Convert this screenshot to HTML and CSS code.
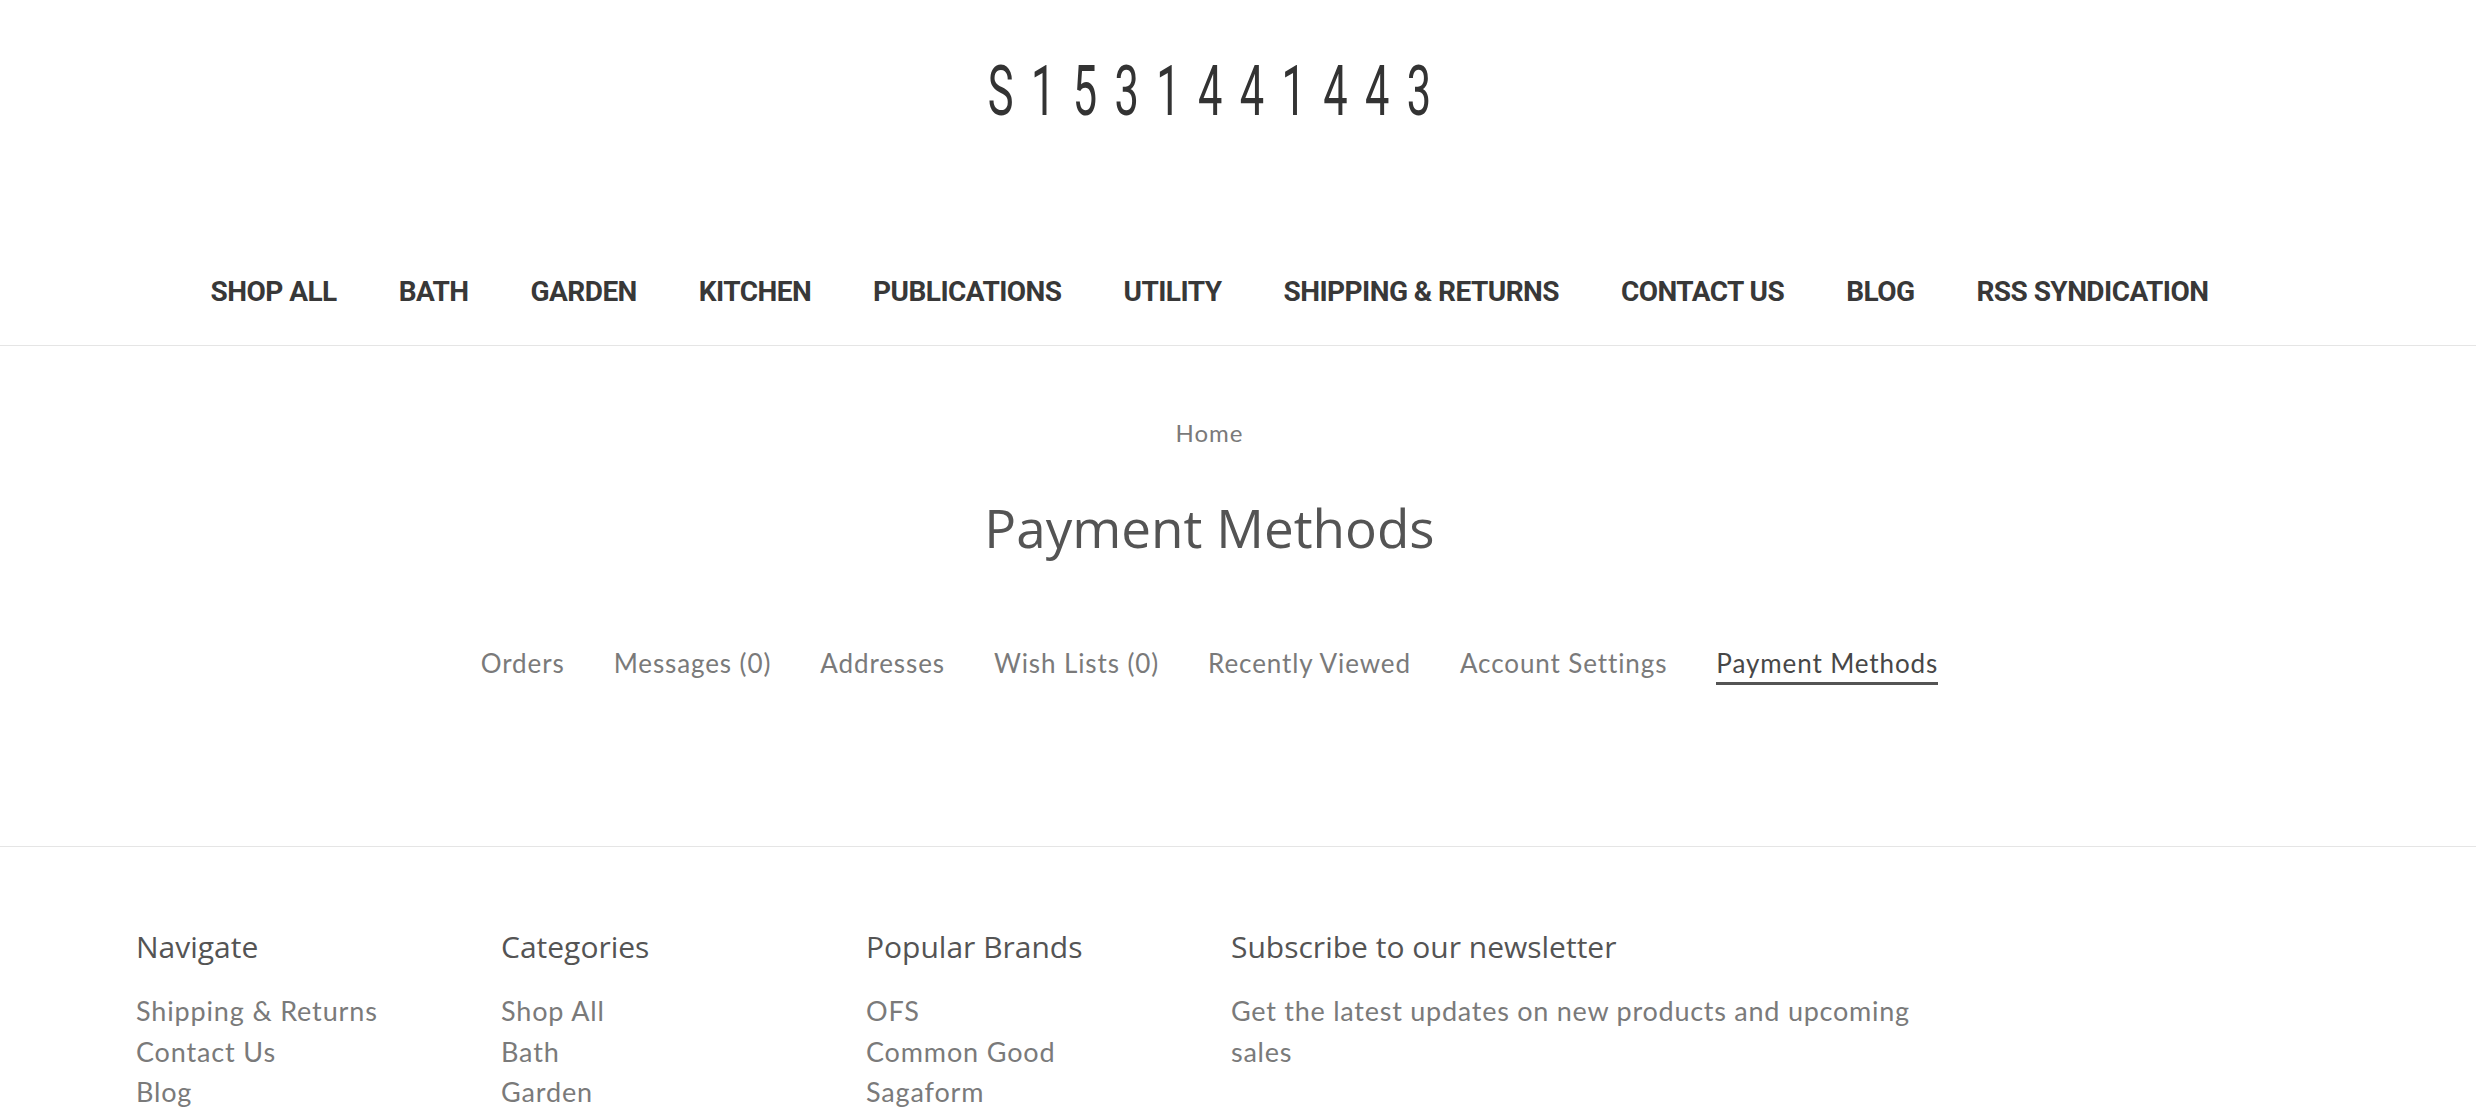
FILE: index.html
```html
<!DOCTYPE html>
<html lang="en">
<head>
<meta charset="utf-8">
<title>Payment Methods</title>
<link rel="stylesheet" href="styles.css">
</head>
<body>
<header class="header">
  <div class="logo-row">
    <a class="logo" href="#"><span class="logo-text">S1531441443</span></a>
  </div>
  <nav class="main-nav">
    <a href="#">SHOP ALL</a>
    <a href="#">BATH</a>
    <a href="#">GARDEN</a>
    <a href="#">KITCHEN</a>
    <a href="#">PUBLICATIONS</a>
    <a href="#">UTILITY</a>
    <a href="#">SHIPPING &amp; RETURNS</a>
    <a href="#">CONTACT US</a>
    <a href="#">BLOG</a>
    <a href="#">RSS SYNDICATION</a>
  </nav>
</header>
<main class="main">
  <div class="breadcrumb"><a href="#">Home</a></div>
  <h1 class="page-title">Payment Methods</h1>
  <nav class="account-nav">
    <a href="#">Orders</a>
    <a href="#">Messages (0)</a>
    <a href="#">Addresses</a>
    <a href="#">Wish Lists (0)</a>
    <a href="#">Recently Viewed</a>
    <a href="#">Account Settings</a>
    <a href="#" class="active">Payment Methods</a>
  </nav>
</main>
<footer class="footer">
  <div class="footer-cols">
    <div class="footer-col">
      <h5 class="footer-heading">Navigate</h5>
      <ul class="footer-list">
        <li><a href="#">Shipping &amp; Returns</a></li>
        <li><a href="#">Contact Us</a></li>
        <li><a href="#">Blog</a></li>
      </ul>
    </div>
    <div class="footer-col">
      <h5 class="footer-heading">Categories</h5>
      <ul class="footer-list">
        <li><a href="#">Shop All</a></li>
        <li><a href="#">Bath</a></li>
        <li><a href="#">Garden</a></li>
      </ul>
    </div>
    <div class="footer-col">
      <h5 class="footer-heading">Popular Brands</h5>
      <ul class="footer-list">
        <li><a href="#">OFS</a></li>
        <li><a href="#">Common Good</a></li>
        <li><a href="#">Sagaform</a></li>
      </ul>
    </div>
    <div class="footer-col footer-col-wide">
      <h5 class="footer-heading">Subscribe to our newsletter</h5>
      <p class="footer-text">Get the latest updates on new products and upcoming sales</p>
    </div>
  </div>
</footer>
</body>
</html>
```
FILE: styles.css
```css
html, body {
  margin: 0;
  padding: 0;
  background: #ffffff;
}
body {
  font-family: Lato, "Noto Sans", sans-serif;
  color: #7a7a7a;
  overflow: hidden;
}
a {
  text-decoration: none;
  color: inherit;
}

.header {
  border-bottom: 1px solid #e5e5e5;
}
.logo-row {
  display: flex;
  justify-content: center;
  padding-right: 57px;
  height: 176px;
  padding-top: 43px;
  box-sizing: border-box;
}
.logo {
  display: inline-block;
  height: 96px;
}
.logo-text {
  display: inline-block;
  font-family: Roboto, sans-serif;
  font-weight: 400;
  font-size: 70px;
  line-height: 96px;
  color: #333333;
  letter-spacing: 28px;
  padding-left: 28px;
  transform: scaleX(0.62);
}

.main-nav {
  display: flex;
  justify-content: center;
  gap: 62px;
  padding-right: 57px;
  height: 169px;
  padding-top: 96px;
  box-sizing: border-box;
}
.main-nav a {
  font-family: Roboto, sans-serif;
  font-weight: 700;
  font-size: 28px;
  line-height: 40px;
  color: #383838;
  letter-spacing: -0.55px;
}

.main {
  display: flex;
  flex-direction: column;
  align-items: center;
  padding-right: 57px;
  padding-top: 70px;
  height: 501px;
  box-sizing: border-box;
  border-bottom: 1px solid #e5e5e5;
}
.breadcrumb {
  font-size: 24px;
  letter-spacing: 1px;
  line-height: 34px;
  color: #7a7a7a;
}
.page-title {
  margin: 42px 0 0 0;
  font-family: "Open Sans", sans-serif;
  font-weight: 400;
  font-size: 53px;
  line-height: 72px;
  color: #545454;
}
.account-nav {
  display: flex;
  gap: 49px;
  margin-top: 81px;
}
.account-nav a {
  font-size: 26px;
  letter-spacing: 0.9px;
  line-height: 36px;
  color: #7a7a7a;
  padding-bottom: 1px;
  border-bottom: 3px solid transparent;
}
.account-nav a.active {
  color: #474747;
  border-bottom-color: #545454;
}

.footer {
  padding: 80px 136px 0 136px;
}
.footer-cols {
  display: flex;
}
.footer-col {
  width: 365px;
}
.footer-col-wide {
  width: 700px;
}
.footer-heading {
  margin: 0 0 24px 0;
  font-family: "Open Sans", sans-serif;
  font-weight: 400;
  font-size: 30px;
  line-height: 40px;
  color: #545454;
}
.footer-list {
  list-style: none;
  margin: 0;
  padding: 0;
}
.footer-list li {
  font-size: 27px;
  letter-spacing: 0.85px;
  line-height: 40.5px;
}
.footer-text {
  margin: 0;
  font-size: 27px;
  letter-spacing: 0.75px;
  line-height: 40.5px;
  max-width: 690px;
}
```
